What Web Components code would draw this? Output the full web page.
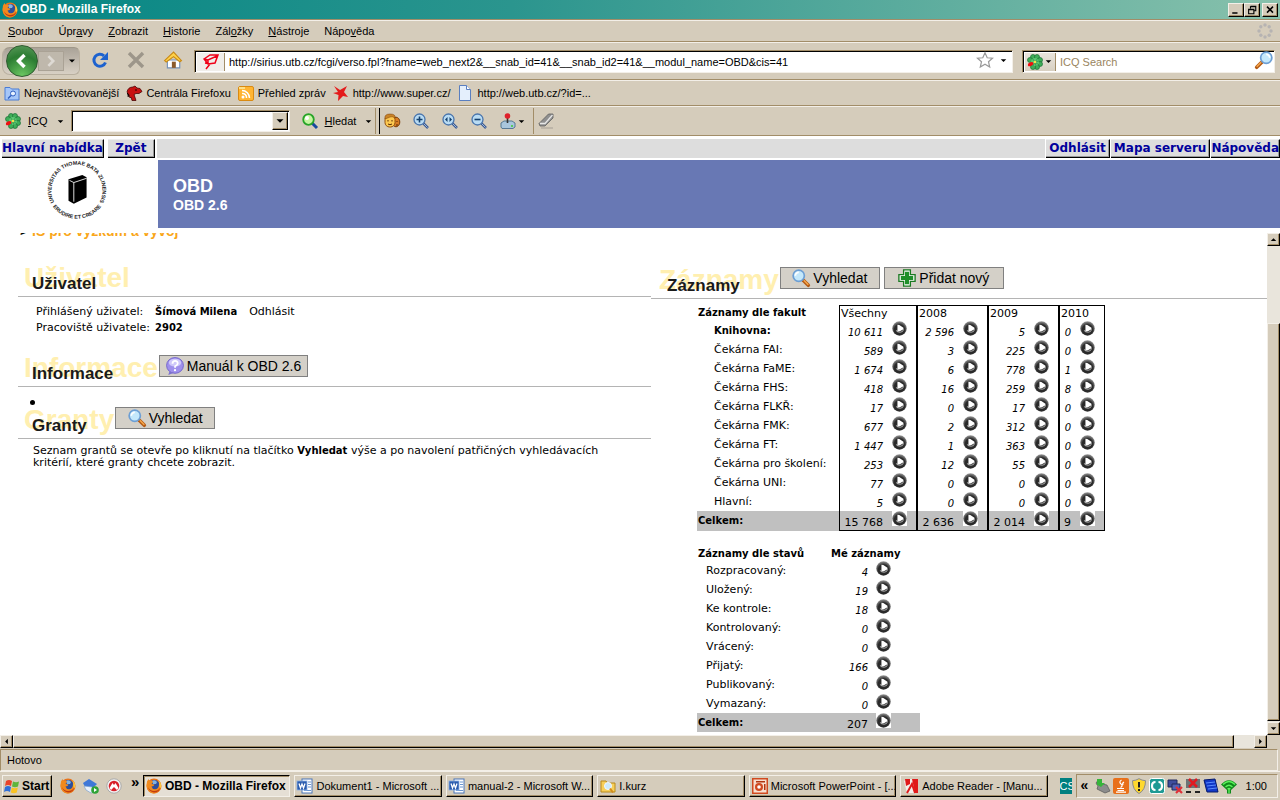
<!DOCTYPE html>
<html lang="cs">
<head>
<meta charset="utf-8">
<title>OBD - Mozilla Firefox</title>
<style>
  html, body {
    height: 100%;
    margin: 0;
  }
  body {
    --face: #d5ccbb;
    --light: #f3efe8;
    --dark: #a28d68;
    --track: #e9e5dc;
    overflow: hidden;
    font: 11px/14px "Liberation Sans", Arial, sans-serif;
    color: #000;
  }
</style>
</head>
<body>
<browser-window>
  <title-bar slot="chrome">OBD - Mozilla Firefox</title-bar>
  <menu-bar slot="chrome"></menu-bar>
  <nav-bar slot="chrome"></nav-bar>
  <bookmark-bar slot="chrome"></bookmark-bar>
  <icq-bar slot="chrome"></icq-bar>
  <page-banner slot="page"></page-banner>
  <page-content slot="page"></page-content>
  <status-bar slot="footer">Hotovo</status-bar>
  <task-bar slot="footer"></task-bar>
</browser-window>

<script>
const flower = `<g fill="#3fae58" stroke="#1d7038" stroke-width=".7">
  <circle cx="6" cy="3" r="2.5"/><circle cx="10" cy="3" r="2.5"/><circle cx="13" cy="6" r="2.5"/><circle cx="13" cy="10" r="2.5"/>
  <circle cx="10" cy="13" r="2.5"/><circle cx="6" cy="13" r="2.5"/><circle cx="3" cy="6" r="2.5"/></g>
  <circle cx="8" cy="8" r="4" fill="#5cc873"/>
  <path d="M8 8L5 4M8 8l3-4M8 8l4-1M8 8l4 3M8 8l1 4M8 8l-2 4" stroke="#2a8a44" stroke-width=".7"/>
  <ellipse cx="3.600" cy="10" rx="3" ry="1.800" fill="#f01010" transform="rotate(-25 4 10)"/><circle cx="8" cy="8" r="1.300" fill="#f6e34a"/>`;

const zoomLens = (inner) => `<path d="M10 10l5 5" stroke="#3a5a92" stroke-width="2.500"/><path d="M10 10l4.500 4.500" stroke="#9fb6d8"/>
  <circle cx="6.500" cy="6.500" r="5.500" fill="#b9dcf4" stroke="#4a75ac" stroke-width="1.300"/>
  <g stroke="#14406e" stroke-width="1.600" fill="#14406e">${inner}</g>`;

const magnifier = (flip) => `<g ${flip ? 'transform="matrix(-1 0 0 1 16 0)"' : ""}>
  <path d="M10 10l4.500 4.500" stroke="#b45a14" stroke-width="3.200" stroke-linecap="round"/><path d="M10.500 10l4 4" stroke="#f7a84c" stroke-width="1.200"/>
  <circle cx="6" cy="6" r="5" fill="#c4e8fb" stroke="#6d9fd4" stroke-width="1.500"/><path d="M3 6a3 3 0 0 1 3-3" stroke="#fff" stroke-width="1.500" fill="none"/></g>`;

const word = `<rect x="5" y="1" width="10" height="14" fill="#fff" stroke="#4a74b8"/><path d="M11 4h3M11 6.500h3M11 9h3M7 12.500h7" stroke="#6a94d0"/>
  <rect x="0" y="3" width="10" height="9" fill="#2b5cae" stroke="#8eb2e6" stroke-width=".8"/><path d="M2 5.500l1.500 4.500L5 6l1.500 4L8 5.500" stroke="#fff" stroke-width="1.300" fill="none"/>`;

const icons = {
  firefox: `<circle cx="8" cy="8" r="7.500" fill="#e8731a"/><circle cx="8.500" cy="7" r="5" fill="#2d4f9c"/><path d="M6 3q3-2 5 1l-1 2-3 0z" fill="#7fb2e2"/>
    <path d="M1 3.500L2.500 1l1 2Q6 2 7 4L5.500 6l3 .5-1 1.500-2 .5q1 3.500 5 2.500 2.500-1 2.500-5l1-2q2.500 6-1.500 9.500-4.500 3.500-9 .5Q-.5 10 1 3.500z" fill="#f08a1e"/>
    <path d="M2 9q1 4.500 6 5.500 5 0 6.500-5Q12 13 8 13 4 13 2 9z" fill="#c33a10"/><path d="M12 2q4 3 3 8l-1.500-1q.5-4-1.500-7z" fill="#fbc640"/>`,
  reload: `<path d="M13.500 10.500A6 6 0 1 1 12 3.800" fill="none" stroke="#1d62cf" stroke-width="3"/><path d="M16 0v8H8z" fill="#1d62cf"/>`,
  stop: `<path d="M1 1l14 14M15 1L1 15" stroke="#9d968a" stroke-width="3.400"/>`,
  home: `<path d="M3 8h11v7H3z" fill="#fff" stroke="#7390b8"/><path d="M7 9.500h3.500V15H7z" fill="#8b5a2b"/><path d="M0.500 8.500L8.500 1l7 7.500-1.500 1L8.500 5 2 9.800z" fill="#ffd24a" stroke="#c98a16"/>`,
  verso: `<path d="M1 5L7 1h8l-3 8-7 1zM1 5l4 1 9-4M5 6v4M2 9l5 1-4 5" fill="none" stroke="#f00018" stroke-width="1.500"/>`,
  flower,
  star: `<path d="M8 .8l2.200 5 5.300.4-4 3.500 1.200 5.400L8 12.300l-4.700 2.800 1.200-5.400-4-3.500 5.300-.4z" fill="#fff" stroke="#999" stroke-width="1.200"/>`,
  find: magnifier(false),
  findLeft: magnifier(true),
  findGreen: `<path d="M10 10l5 5" stroke="#1749a0" stroke-width="3"/><circle cx="6.500" cy="6.500" r="5.300" fill="#c6f5a0" stroke="#28a428" stroke-width="1.800"/><circle cx="5" cy="5" r="2" fill="#fff"/>`,
  folderBlue: `<path d="M1 2.500h5l1.500 1.500H15v11H1z" fill="#a5c6f8" stroke="#4b7cd4"/><circle cx="9" cy="8.500" r="2.500" fill="#e9f3ff" stroke="#2d5ec0"/><path d="M7 10.500l-3 3" stroke="#2d5ec0" stroke-width="1.500"/>`,
  dino: `<path d="M1 7Q2 2 7 2l2-1 2 2 3 .5 2 3-3 2H10l-2 1 2 6H6L5 12l-1 1-1-3z" fill="#c81010" stroke="#4a0505" stroke-width=".8"/><path d="M1 8l2 2-1 2M9 5h2" stroke="#200"/>`,
  rss: `<rect x=".5" y="1.500" width="15" height="14" rx="1.500" fill="#ffb432" stroke="#d98a12"/><path d="M1 2h6v2H1z" fill="#fce08a"/><circle cx="5" cy="12" r="1.500" fill="#fff"/><path d="M4 8.500a4 4 0 0 1 4.500 4.500M4 5.500A7.500 7.500 0 0 1 11.500 13" fill="none" stroke="#fff" stroke-width="1.500"/>`,
  redStar: `<path d="M1 1l6 4 7-4-3 6 4 5-5-1-5 5 .5-6L0 8l5-1z" fill="#e41b1b"/>`,
  page: `<path d="M2.500.5h7l4 4v11h-11z" fill="#e4effc" stroke="#5a7fc0"/><path d="M9.500.5v4h4" fill="#fff" stroke="#5a7fc0"/>`,
  faces: `<ellipse cx="12" cy="9" rx="3.800" ry="4.800" fill="#d87c24" stroke="#7a3d08"/><rect x="1" y="2" width="10" height="12" rx="4.500" fill="#fcc850" stroke="#92500e"/><path d="M1 6Q0 1 6 1t5 4Q8 3 6 4T1 6z" fill="#c98428" stroke="#7a3d08" stroke-width=".5"/><path d="M4 7v1.500M8 7v1.500M4 11q2 1.500 4 0M13 8v1M12 12h2" stroke="#5a2b05" fill="none"/>`,
  zoomIn: zoomLens(`<path d="M3.500 6.500h6M6.500 3.500v6"/>`),
  zoomFit: zoomLens(`<path d="M5.500 4v5L3 6.500zM7.500 4v5L10 6.500z" stroke="none"/>`),
  zoomOut: zoomLens(`<path d="M3.500 6.500h6"/>`),
  joystick: `<path d="M1 10l3-2h8l3 2v4l-2 1.500H2L1 14z" fill="#a9c6dc" stroke="#3d6484" stroke-width=".8"/><path d="M7.500 4v6" stroke="#333" stroke-width="1.600"/><circle cx="7.500" cy="3" r="2.800" fill="#e0202a"/><circle cx="12" cy="13" r="1" fill="#3ccc35"/>`,
  eraser: `<path d="M3 15h12" stroke="#b5aea2" stroke-width="1.500"/><path d="M1 10.500L10.500 1H15v4L7 13H2z" fill="#8f8f8f" stroke="#5e5e5e" stroke-width=".8"/><path d="M2 10.500h5L14.500 2" fill="none" stroke="#e6e6e6" stroke-width="1.300"/>`,
  throbber: `<g fill="#b6b3b2"><circle cx="8" cy="2" r="1.700"/><circle cx="12.200" cy="3.800" r="1.700"/><circle cx="14" cy="8" r="1.700"/><circle cx="12.200" cy="12.200" r="1.700"/><circle cx="8" cy="14" r="1.700"/><circle cx="3.800" cy="12.200" r="1.700"/><circle cx="2" cy="8" r="1.700"/><circle cx="3.800" cy="3.800" r="1.700"/></g>`,
  help: `<ellipse cx="8" cy="7.500" rx="7.500" ry="7" fill="#9f90ec" stroke="#6f62c8" stroke-width=".8"/><path d="M3 13l-1 3 5-2z" fill="#7d70cf"/><ellipse cx="8" cy="5" rx="5.500" ry="3.500" fill="#cfc8fa"/><path d="M5.800 6q0-2.500 2.300-2.500T10.400 5.800q0 1.200-2.300 2.400v1.300" fill="none" stroke="#fff" stroke-width="1.600"/><circle cx="8" cy="11.700" r="1" fill="#fff"/>`,
  plus: `<path d="M5 .8h6V5h4.200v6H11v4.200H5V11H.8V5H5z" fill="#fff" stroke="#1a7a22" stroke-width="1.200"/><path d="M6.200 2.500h3.600v3.700h3.700v3.600H9.800v3.700H6.200V9.800H2.500V6.200h3.700z" fill="#1f8f2a"/>`,
  play: `<defs><radialGradient id="b" cx=".5" cy=".6" r=".6"><stop offset=".6" stop-color="#2a2a2a"/><stop offset="1" stop-color="#9a9a9a"/></radialGradient></defs>
    <circle cx="8" cy="8" r="7.700" fill="url(#b)"/><path d="M4.500 10a4.500 4.500 0 0 0 8-1" fill="none" stroke="#999" stroke-width="1.200"/><path d="M5.800 4l2 .2 4.400 3v1.600L8.500 11l-2.700.3z" fill="#fff"/>`,
  windows: `<path d="M2 3q3-2 6 0L7 8Q4 6 1 8z" fill="#e8432a"/><path d="M9 3.500q3 1.500 6 0L14 8.500q-3 1.500-6 0z" fill="#5fb53c"/><path d="M1 9q3-2 6 0l-1 5Q3 12 0 14z" fill="#2f6fd8"/><path d="M7.800 9.500q3 1.500 6 0l-1 5q-3 1.500-6 0z" fill="#f9c222"/>`,
  bird: `<path d="M0 5l6-4 8 5-4 4-8-1z" fill="#3f78d8"/><path d="M1 8l8 1 4 5-5 1-5-3z" fill="#e9f1fb" stroke="#7ea2cc" stroke-width=".7"/><circle cx="12" cy="12" r="3.800" fill="#2ea336"/><path d="M11 10l3 2-3 2z" fill="#fff"/>`,
  alert: `<circle cx="8" cy="8" r="7.200" fill="#f4f4f4" stroke="#aaa"/><circle cx="8" cy="8" r="5.300" fill="#d8202a"/><path d="M3.500 10l3-5L8 7l1.500-2 3 5-1.500 2-3-3-3 3z" fill="#fff"/>`,
  word,
  folder: `<path d="M1 3h5l1.500 2H15v9H1z" fill="#f7cf5a" stroke="#b98a1c"/><circle cx="8" cy="8" r="3.500" fill="#cdeafc" stroke="#f1f8ff"/><path d="M10 10.500l3 4" stroke="#d38b1c" stroke-width="2"/>`,
  powerpoint: `<rect x="0" y="0" width="16" height="16" fill="#d04a20"/><rect x="1.500" y="1.500" width="13" height="13" fill="#f7dfd0"/><circle cx="7" cy="9" r="4" fill="#d04a20"/><circle cx="7" cy="9" r="1.800" fill="#fff"/><path d="M4 3h9v1.500H4zM12 6h1.500v6H12z" fill="#b03510"/>`,
  adobe: `<path d="M1 3l4-2h10v14H4z" fill="#f3f0ec"/><path d="M2 1h5v5L3 8zM9 1h6v14h-3z" fill="#e01a1a"/><path d="M4 15L9 6l3 9" fill="none" stroke="#e01a1a" stroke-width="2"/>`,
  usb: `<path d="M4 1l3 5 5 1 3 6-5 2-8-4 1-3-2-3z" fill="#8c8c8c" stroke="#555" stroke-width=".7"/><path d="M2 1h5v4h3L6 9 1 6h1z" fill="#36b53a"/>`,
  java: `<rect width="16" height="16" rx="2" fill="#e8701a"/><path d="M8.500 2q-3 2-.5 4t-.5 3.500M11 4Q9 5 10 7M4 10.500h7M4.500 12.500h6.500M3 14.200h10" stroke="#fff" stroke-width="1.200" fill="none"/>`,
  shield: `<path d="M8 .7q3 1.800 6.500 2Q14.500 12 8 15.500 1.500 12 1.500 2.700 5 2.500 8 .7z" fill="#ffd92e" stroke="#8b8b8b"/><path d="M8 4v5.500M8 11v2" stroke="#222" stroke-width="2"/>`,
  sync: `<rect x=".5" y=".5" width="15" height="15" rx="2" fill="#1e9a94" stroke="#fff"/><path d="M6.500 4Q3 4 3 8t3.500 4M9.500 4Q13 4 13 8t-3.500 4" fill="none" stroke="#fff" stroke-width="2.200"/>`,
  netOff: `<path d="M1 2h9v7H1z" fill="#3e4d9c" stroke="#20285c"/><path d="M5 6h8v6H5z" fill="#5262b4" stroke="#20285c"/><path d="M9 9l6 6M15 9l-6 6" stroke="#e03038" stroke-width="2.200"/>`,
  netCross: `<path d="M1 1h14v9H1z" fill="#6c7476"/><path d="M4 1l8 8M12 1L4 9" stroke="#e01a20" stroke-width="2.500"/><path d="M1 13h5v2H1zM10 13h5v2h-5z" fill="#222"/>`,
  monitor: `<path d="M1 2l11-1 3 13H4z" fill="#1238c8" stroke="#061a6a"/><path d="M3 5l9-1M4 8l9-1M5 11l9-1" stroke="#5b8cff"/>`,
  wifi: `<path d="M0 6.500Q8-2 16 6.500L10 12v3.500H6V12z" fill="#0f8a1a"/><path d="M2 6.500q6-6 12 0M4.500 9q3.500-3.500 7 0M6.500 11q1.500-1 3 0M8 11v4" fill="none" stroke="#5cf05c" stroke-width="1.400"/>`,
  minimize: `<path d="M3 11h7v2H3z"/>`,
  restore: `<path d="M6 3h7v6h-2M6 3.500h7M6 3v3M3.500 7h7v6h-7zM3.500 7.500h7" fill="none" stroke="#000" stroke-width="1.500"/>`,
  close: `<path d="M4 3.500l8 8M12 3.500l-8 8" stroke="#000" stroke-width="2"/>`,
  down: `<path d="M4 6h8l-4 4z"/>`,
  up: `<path d="M4 10h8L8 6z"/>`,
  left: `<path d="M10 4v8L6 8z"/>`,
  right: `<path d="M6 4v8l4-4z"/>`,
};

// Base class: every component is a plain template in an open shadow root
class View extends HTMLElement {
  constructor() {
    super();
    this.attachShadow({ mode: "open" });
  }

  connectedCallback() {
    this.shadowRoot.innerHTML = `
      <style>
        :host { display: block; box-sizing: border-box; }
        * { box-sizing: border-box; }
        button, input, select {
          font: inherit;
          color: inherit;
          margin: 0;
          padding: 0;
          border: 0;
          border-radius: 0;
          background: none;
        }
        .raised {
          background: var(--face);
          border: 1px solid;
          border-color: var(--light) #000 #000 var(--light);
          box-shadow: inset -1px -1px var(--dark);
        }
      </style>
      ${this.template()}
    `;
  }
}

class AppIcon extends View {
  template() {
    const size = this.getAttribute("size") || 16;
    return `
      <style>
        :host { display: inline-flex; flex: none; }
        svg { display: block; overflow: visible; }
      </style>
      <svg width="${size}" height="${size}" viewBox="0 0 16 16" aria-hidden="true">${icons[this.getAttribute("name")]}</svg>
    `;
  }
}

class BrowserWindow extends View {
  template() {
    return `
      <style>
        :host {
          display: flex;
          flex-direction: column;
          height: 100vh;
          background: var(--face);
        }
        main {
          flex: 1;
          min-height: 0;
          display: flex;
          flex-direction: column;
          background: #fff;
        }
      </style>
      <slot name="chrome"></slot>
      <main><slot name="page"></slot></main>
      <slot name="footer"></slot>
    `;
  }
}

class TitleBar extends View {
  template() {
    return `
      <style>
        :host {
          display: flex;
          align-items: center;
          height: 20px;
          padding: 0 2px;
          border-bottom: 1px solid var(--dark);
          background: linear-gradient(to right, #048684, #2b958e 40%, #88c1ac);
          color: #fff;
          font-size: 12px;
          font-weight: bold;
        }
        h1 { flex: 1; margin: 0 0 2px 2px; font-size: 12px; }
        button { width: 16px; height: 14px; display: grid; place-items: center; }
        button:last-child { margin-left: 2px; }
      </style>
      <app-icon name="firefox"></app-icon>
      <h1><slot></slot></h1>
      <button class="raised" aria-label="Minimalizovat"><app-icon name="minimize" size="12"></app-icon></button>
      <button class="raised" aria-label="Obnovit"><app-icon name="restore" size="12"></app-icon></button>
      <button class="raised" aria-label="Zavřít"><app-icon name="close" size="12"></app-icon></button>
    `;
  }
}

class MenuBar extends View {
  template() {
    return `
      <style>
        :host {
          display: flex;
          align-items: center;
          height: 22px;
          padding: 0 7px 0 8px;
          border-top: 1px solid var(--light);
          border-bottom: 1px solid var(--dark);
        }
        nav { flex: 1; display: flex; gap: 15px; }
      </style>
      <nav>
        <button><u>S</u>oubor</button>
        <button>Úpr<u>a</u>vy</button>
        <button><u>Z</u>obrazit</button>
        <button><u>H</u>istorie</button>
        <button>Zál<u>o</u>žky</button>
        <button><u>N</u>ástroje</button>
        <button>Nápo<u>v</u>ěda</button>
      </nav>
      <app-icon name="throbber"></app-icon>
    `;
  }
}

class NavBar extends View {
  template() {
    return `
      <style>
        :host {
          display: flex;
          align-items: center;
          gap: 20px;
          height: 38px;
          padding: 0 5px 0 2px;
          border-top: 1px solid var(--light);
          border-bottom: 1px solid var(--dark);
        }
        .travel {
          display: flex;
          align-items: center;
          width: 78px;
          height: 28px;
          margin-right: -8px;
          border: 1px solid #b9b0a0;
          border-top-color: #9f9788;
          border-radius: 8px 6px 6px 8px;
          background: linear-gradient(#aaa398, #d8d0c4);
        }
        .travel button { display: grid; place-items: center; }
        .travel .back {
          width: 32px;
          height: 32px;
          margin: 0 0 0 3px;
          border: 1px solid #2f5c30;
          border-radius: 50%;
          background: radial-gradient(circle at 50% 100%, #6cc862, #2c7c32 60%, #5e9c5e);
        }
        .travel .forward {
          width: 26px;
          height: 20px;
          border: 1px solid #aaa295;
          background: #bfb8ac;
        }
        .arrow { width: 15px; }
        .field {
          display: flex;
          align-items: center;
          height: 23px;
          border: 1px solid;
          border-color: var(--dark) var(--light) var(--light) var(--dark);
          box-shadow: inset 1px 1px #000;
          background: #fff;
          padding: 2px 1px 1px 2px;
        }
        .field input { flex: 1; min-width: 0; height: 100%; padding: 0 4px; outline: 0; }
        .field input::placeholder { color: #9a8560; opacity: 1; }
        .url { flex: 1; margin-left: -8px; }
        .search { width: 253px; margin-left: -11px; }
        .tag {
          display: flex;
          align-items: center;
          justify-content: center;
          width: 28px;
          height: 100%;
          border-right: 1px solid var(--dark);
          background: linear-gradient(#e9e4dc, #d8d0c2);
        }
        .url .tag { background: #f0eeea; }
        .search .tag { width: 31px; border-right: 1px solid var(--dark); background: linear-gradient(#e9e4dc, #d8d0c2); }
        .url > .arrow { margin-left: 3px; }
      </style>
      <div class="travel">
        <button class="back" aria-label="Zpět">
          <svg width="16" height="16" viewBox="0 0 16 16"><path d="M10.500 2l-6 6 6 6" fill="none" stroke="#fff" stroke-width="3.500"/></svg>
        </button>
        <button class="forward" aria-label="Vpřed">
          <svg width="14" height="14" viewBox="0 0 16 16"><path d="M5 2.500l5.500 5.500L5 13.500" fill="none" stroke="#dedad4" stroke-width="3"/></svg>
        </button>
        <button class="arrow" aria-label="Historie"><app-icon name="down" size="12"></app-icon></button>
      </div>
      <button aria-label="Obnovit"><app-icon name="reload"></app-icon></button>
      <button aria-label="Zastavit"><app-icon name="stop"></app-icon></button>
      <button aria-label="Domů"><app-icon name="home" size="18"></app-icon></button>
      <div class="field url">
        <span class="tag"><app-icon name="verso"></app-icon></span>
        <input type="text" aria-label="Adresa" value="http://sirius.utb.cz/fcgi/verso.fpl?fname=web_next2&amp;__snab_id=41&amp;__snab_id2=41&amp;__modul_name=OBD&amp;cis=41">
        <button aria-label="Přidat záložku"><app-icon name="star"></app-icon></button>
        <button class="arrow" aria-label="Adresy"><app-icon name="down" size="11"></app-icon></button>
      </div>
      <div class="field search">
        <button class="tag" aria-label="Vyhledávač"><app-icon name="flower"></app-icon><app-icon name="down" size="11"></app-icon></button>
        <input type="text" aria-label="Hledat" placeholder="ICQ Search">
        <button aria-label="Hledat"><app-icon name="findLeft" size="18"></app-icon></button>
      </div>
    `;
  }
}

class BookmarkBar extends View {
  template() {
    const links = [
      ["folderBlue", "Nejnavštěvovanější"],
      ["dino", "Centrála Firefoxu"],
      ["rss", "Přehled zpráv"],
      ["redStar", "http://www.super.cz/"],
      ["page", "http://web.utb.cz/?id=..."],
    ];
    return `
      <style>
        :host {
          display: flex;
          align-items: center;
          gap: 7px;
          height: 26px;
          padding: 0 4px;
          border-top: 1px solid var(--light);
          border-bottom: 1px solid var(--dark);
        }
        a {
          display: flex;
          align-items: center;
          gap: 4px;
          color: inherit;
          text-decoration: none;
          white-space: nowrap;
        }
      </style>
      ${links.map(([icon, text]) => `<a href="#"><app-icon name="${icon}"></app-icon>${text}</a>`).join("")}
    `;
  }
}

class IcqBar extends View {
  template() {
    return `
      <style>
        :host {
          display: flex;
          align-items: center;
          height: 30px;
          padding: 0 5px;
          border-top: 1px solid var(--light);
          border-bottom: 1px solid var(--dark);
        }
        button { display: flex; align-items: center; gap: 7px; }
        .combo {
          display: flex;
          width: 219px;
          height: 22px;
          margin: 0 12px 0 5px;
          border: 1px solid;
          border-color: var(--dark) var(--light) var(--light) var(--dark);
          box-shadow: inset 1px 1px #000;
          background: #fff;
          padding: 1px;
        }
        .combo input { flex: 1; min-width: 0; padding-left: 4px; outline: 0; }
        .combo button { width: 16px; justify-content: center; }
        .search { margin-right: 7px; }
        .tools { display: flex; align-items: center; gap: 13px; padding: 0 5px 0 4px; }
        .line { width: 1px; height: 26px; margin-left: 1px; background: var(--dark); }
        .black { margin-left: 3px; background: #000; }
        .tools .joy { gap: 0; }
      </style>
      <button><app-icon name="flower"></app-icon><span><u>I</u>CQ</span><app-icon name="down" size="11"></app-icon></button>
      <div class="combo">
        <input type="text" aria-label="ICQ hledání">
        <button class="raised" aria-label="Rozbalit"><app-icon name="down" size="14"></app-icon></button>
      </div>
      <button class="search"><app-icon name="findGreen"></app-icon><span><u>H</u>ledat</span></button>
      <button aria-label="Možnosti"><app-icon name="down" size="11"></app-icon></button>
      <span class="line"></span>
      <span class="line black"></span>
      <div class="tools">
        <button aria-label="Přátelé"><app-icon name="faces"></app-icon></button>
        <button aria-label="Zvětšit"><app-icon name="zoomIn"></app-icon></button>
        <button aria-label="Původní velikost"><app-icon name="zoomFit"></app-icon></button>
        <button aria-label="Zmenšit"><app-icon name="zoomOut"></app-icon></button>
        <button class="joy" aria-label="Hry"><app-icon name="joystick"></app-icon><app-icon name="down" size="11"></app-icon></button>
      </div>
      <span class="line"></span>
      <div class="tools"><button aria-label="Vymazat"><app-icon name="eraser"></app-icon></button></div>
    `;
  }
}

class PageBanner extends View {
  template() {
    return `
      <style>
        :host { flex: none; font-family: "Liberation Sans", Arial, sans-serif; }
        nav {
          display: flex;
          gap: 1px;
          height: 22px;
          padding: 3px 0 0 2px;
          font: bold 12px/16px "DejaVu Sans", Verdana, sans-serif;
        }
        nav a {
          padding: 0;
          min-width: 47px;
          text-align: center;
          color: #00009c;
          text-decoration: none;
          white-space: nowrap;
          background: #ddd;
          border-top: 1px solid #eee;
          border-right: 1px solid #000;
          border-bottom: 1px solid #000;
          box-shadow: inset -1px -1px #999;
        }
        nav a.wide { padding: 0 3px; }
        nav .back { margin: 0 1px 0 3px; }
        nav span { flex: 1; background: #ddd; }
        header { display: flex; margin-top: 2px; height: 68px; }
        .logo { width: 158px; flex: none; }
        .logo svg { display: block; margin: -3px 0 0 45px; overflow: visible; }
        .name { flex: 1; padding: 16px 15px 0; background: #6878b4; color: #fff; }
        h2 { margin: 0; font-size: 18px; line-height: 21px; }
        p { margin: 0; font-size: 14px; line-height: 16px; font-weight: bold; }
      </style>
      <nav>
        <a href="#">Hlavní nabídka</a>
        <a href="#" class="back">Zpět</a>
        <span></span>
        <a href="#" class="wide">Odhlásit</a>
        <a href="#" class="wide">Mapa serveru</a>
        <a href="#">Nápověda</a>
      </nav>
      <header>
        <div class="logo">
          <svg width="64" height="66" viewBox="0 0 60 62" role="img" aria-label="Univerzita Tomáše Bati ve Zlíně">
            <path id="top" d="M9 43A24 24 0 1 1 51 43" fill="none"/>
            <path id="bottom" d="M7 46A28 28 0 0 0 53 46" fill="none"/>
            <g font-family="Liberation Sans, Arial, sans-serif" font-size="5" font-weight="bold" fill="#222" text-anchor="middle">
              <text><textPath href="#top" startOffset="50%">UNIVERSITAS THOMAE BATA ZLINENSIS</textPath></text>
              <text><textPath href="#bottom" startOffset="50%">· ERUDIRE ET CREARE ·</textPath></text>
            </g>
            <path d="M22 21l13-4 4 2v19l-12 6-5-3z" fill="#000"/><path d="M23 22l4 2v18M27 24l12-4" fill="none" stroke="#fff" stroke-width=".8"/>
          </svg>
        </div>
        <div class="name">
          <h2>OBD</h2>
          <p>OBD 2.6</p>
        </div>
      </header>
    `;
  }
}

class ScrollBar extends View {
  template() {
    const vertical = this.hasAttribute("vertical");
    return `
      <style>
        :host {
          display: flex;
          flex: none;
          flex-direction: ${vertical ? "column" : "row"};
          ${vertical ? "width" : "height"}: 13px;
          background: var(--track);
        }
        button { flex: none; width: 13px; height: 13px; display: grid; place-items: center; overflow: hidden; }
        .before { flex: ${this.getAttribute("before")}; }
        .thumb { flex: ${this.getAttribute("thumb")}; }
        .after { flex: ${this.getAttribute("after")}; }
      </style>
      <button class="raised" aria-label="Zpět"><app-icon name="${vertical ? "up" : "left"}" size="11"></app-icon></button>
      <span class="before"></span>
      <span class="thumb raised"></span>
      <span class="after"></span>
      <button class="raised" aria-label="Dále"><app-icon name="${vertical ? "down" : "right"}" size="11"></app-icon></button>
    `;
  }
}

class ToolButton extends View {
  template() {
    return `
      <style>
        button {
          display: flex;
          align-items: center;
          justify-content: center;
          gap: 3px;
          min-width: 100px;
          height: 22px;
          padding: 0 6px;
          border: 1px solid #808080;
          background: #d4d0c8;
          font: 14px/16px "Liberation Sans", Arial, sans-serif;
          white-space: nowrap;
        }
        :host([wide]) button { min-width: 120px; }
      </style>
      <button><app-icon name="${this.getAttribute("icon")}" size="18"></app-icon><slot></slot></button>
    `;
  }
}

// Section heading: a large pale copy of the title lies behind the real one
class SectionHead extends View {
  template() {
    const title = this.getAttribute("title");
    return `
      <style>
        :host {
          display: flex;
          align-items: flex-end;
          gap: 1px;
          padding: 0 0 2px 6px;
          border-bottom: 1px solid #b4b4b4;
          font-family: "Liberation Sans", Arial, sans-serif;
          font-weight: bold;
        }
        .title { position: relative; font-size: 28px; line-height: 32px; color: #ffefb0; }
        h2 {
          position: absolute;
          left: 8px;
          bottom: 0;
          margin: 0;
          font-size: 17px;
          line-height: 20px;
          color: #1a1a1a;
        }
        .actions { display: flex; gap: 4px; margin-bottom: 7px; font-weight: normal; }
      </style>
      <div class="title"><span aria-hidden="true">${title}</span><h2>${title}</h2></div>
      <div class="actions"><slot></slot></div>
    `;
  }
}

// Table of counts; each number has a link that opens the list of records
class CountTable extends View {
  get data() {
    return this.hasAttribute("states")
      ? {
          title: "Záznamy dle stavů",
          heads: ["Mé záznamy"],
          rows: [
            ["Rozpracovaný:", "4"], ["Uložený:", "19"], ["Ke kontrole:", "18"], ["Kontrolovaný:", "0"],
            ["Vrácený:", "0"], ["Přijatý:", "166"], ["Publikovaný:", "0"], ["Vymazaný:", "0"],
          ],
          total: ["Celkem:", "207"],
        }
      : {
          title: "Záznamy dle fakult",
          heads: ["Všechny", "2008", "2009", "2010"],
          rows: [
            ["Knihovna:", "10 611", "2 596", "5", "0"],
            ["Čekárna FAI:", "589", "3", "225", "0"],
            ["Čekárna FaME:", "1 674", "6", "778", "1"],
            ["Čekárna FHS:", "418", "16", "259", "8"],
            ["Čekárna FLKŘ:", "17", "0", "17", "0"],
            ["Čekárna FMK:", "677", "2", "312", "0"],
            ["Čekárna FT:", "1 447", "1", "363", "0"],
            ["Čekárna pro školení:", "253", "12", "55", "0"],
            ["Čekárna UNI:", "77", "0", "0", "0"],
            ["Hlavní:", "5", "0", "0", "0"],
          ],
          total: ["Celkem:", "15 768", "2 636", "2 014", "9"],
        };
  }

  row([label, ...values]) {
    const cells = values.map((value) => `
      <td><div class="cell"><span>${value}</span><a href="#" aria-label="Otevřít"><app-icon name="play" size="15"></app-icon></a></div></td>`);
    return `<tr><th scope="row">${label}</th>${cells.join("")}</tr>`;
  }

  template() {
    const { title, heads, rows, total } = this.data;
    return `
      <style>
        table {
          border-collapse: separate;
          border-spacing: 0;
          table-layout: fixed;
          width: 408px;
          font: 11px/19px "DejaVu Sans", Verdana, sans-serif;
          white-space: nowrap;
        }
        th, td { padding: 0; text-align: left; vertical-align: top; }
        thead th { height: 15px; padding-left: 1px; line-height: 15px; font-weight: normal; }
        thead th:first-child { font-size: 10px; font-weight: bold; }
        tbody th { padding-left: 17px; font-weight: normal; }
        :host(:not([states])) tbody tr:first-child th { font-size: 10px; font-weight: bold; }
        .label { width: 142px; }
        .c0 { width: 78px; }
        .c1, .c2 { width: 71px; }
        .cell {
          display: flex;
          justify-content: flex-end;
          gap: 9px;
          height: 19px;
          padding: 0 9px 0 0;
          line-height: 24px;
        }
        tbody .cell span { font-size: 10px; font-style: italic; }
        a { display: flex; height: 15px; }
        tfoot tr { background: #c0c0c0; }
        tfoot th { padding-left: 1px; font-size: 10px; }
        tfoot a { background: #fff; }
        :host(:not([states])) thead th + th { border-top: 1px solid #000; }
        :host(:not([states])) th + th, :host(:not([states])) td { border-left: 1px solid #000; border-right: 1px solid #000; }
        :host(:not([states])) tfoot td { border-bottom: 1px solid #000; }

        :host([states]) table { width: 223px; }
        :host([states]) .label { width: 134px; }
        :host([states]) .c0 { width: 89px; }
        :host([states]) thead th { font-size: 10px; font-weight: bold; }
        :host([states]) thead th + th { padding-left: 0; }
        :host([states]) tbody th { padding-left: 9px; }
        :host([states]) .cell { padding-right: 29px; gap: 8px; }
      </style>
      <table>
        <colgroup><col class="label">${heads.map((head, i) => `<col class="c${i}">`).join("")}</colgroup>
        <thead><tr><th scope="col">${title}</th>${heads.map((head) => `<th scope="col">${head}</th>`).join("")}</tr></thead>
        <tbody>${rows.map((row) => this.row(row)).join("")}</tbody>
        <tfoot>${this.row(total)}</tfoot>
      </table>
    `;
  }
}

class PageContent extends View {
  template() {
    return `
      <style>
        :host {
          flex: 1;
          min-height: 0;
          margin-top: 5px;
          display: grid;
          grid-template: minmax(0, 1fr) 13px / minmax(0, 1fr) 13px;
          font: 11px/12px "DejaVu Sans", Verdana, sans-serif;
        }
        .view { overflow: hidden; padding-left: 18px; }
        .path {
          margin: -10px 0 0 2px;
          font: bold 14px/16px "Liberation Sans", Arial, sans-serif;
        }
        .path a { color: #f9a61a; text-decoration: none; }
        .columns { display: grid; grid-template-columns: 633fr 616fr; }
        .left { padding-top: 23px; }
        .right { padding-top: 25px; }
        .right section-head { padding-left: 8px; }
        dl {
          display: grid;
          grid-template-columns: 119px max-content;
          margin: 7px 0 16px 18px;
          line-height: 16px;
        }
        dt { white-space: nowrap; }
        dd { display: flex; gap: 12px; margin: 0; }
        b { font-size: 10px; }
        dd a { color: inherit; text-decoration: none; }
        ul { height: 17px; margin: 0; padding-left: 29px; font-size: 16px; line-height: 32px; }
        p { margin: 6px 20px 0 15px; }
        count-table { margin: 6px 0 0 46px; }
        count-table[states] { margin-top: 15px; }
        .corner { background: var(--face); }
      </style>
      <div class="view">
        <div class="path">&gt; <a href="#">IS pro výzkum a vývoj</a></div>
        <div class="columns">
          <div class="left">
            <section-head title="Uživatel"></section-head>
            <dl>
              <dt>Přihlášený uživatel:</dt><dd><b>Šímová Milena</b><a href="#">Odhlásit</a></dd>
              <dt>Pracoviště uživatele:</dt><dd><b>2902</b></dd>
            </dl>
            <section-head title="Informace"><tool-button icon="help">Manuál k OBD 2.6</tool-button></section-head>
            <ul><li></li></ul>
            <section-head title="Granty"><tool-button icon="find">Vyhledat</tool-button></section-head>
            <p>Seznam grantů se otevře po kliknutí na tlačítko <b>Vyhledat</b> výše a po navolení patřičných vyhledávacích kritérií, které granty chcete zobrazit.</p>
          </div>
          <div class="right">
            <section-head title="Záznamy">
              <tool-button icon="find">Vyhledat</tool-button>
              <tool-button icon="plus" wide>Přidat nový</tool-button>
            </section-head>
            <count-table></count-table>
            <count-table states></count-table>
          </div>
        </div>
      </div>
      <scroll-bar vertical before="77" thumb="398" after="1"></scroll-bar>
      <scroll-bar before="0" thumb="1221" after="20"></scroll-bar>
      <div class="corner"></div>
    `;
  }
}

class StatusBar extends View {
  template() {
    return `
      <style>
        :host {
          height: 22px;
          margin: 1px 2px 0 0;
          padding: 3px 6px;
          border: 1px solid;
          border-color: var(--dark) var(--light) var(--light) var(--dark);
        }
      </style>
      <slot></slot>
    `;
  }
}

class TaskButton extends View {
  template() {
    return `
      <style>
        :host { flex: 1; min-width: 0; }
        button {
          display: flex;
          align-items: center;
          gap: 3px;
          width: 100%;
          height: 22px;
          padding: 0 2px;
          white-space: nowrap;
          overflow: hidden;
        }
        :host([active]) button {
          font-size: 12px;
          font-weight: bold;
          background: #e5dfd5;
          border-color: #000 var(--light) var(--light) #000;
          box-shadow: inset 1px 1px var(--dark);
        }
      </style>
      <button class="raised"><app-icon name="${this.getAttribute("icon")}"></app-icon><slot></slot></button>
    `;
  }
}

class TaskBar extends View {
  template() {
    const tray = ["usb", "java", "shield", "sync", "netOff", "netCross", "monitor", "wifi"];
    return `
      <style>
        :host {
          display: flex;
          align-items: center;
          height: 29px;
          padding: 0 2px;
          border-top: 1px solid var(--light);
        }
        .start {
          display: flex;
          align-items: center;
          gap: 2px;
          width: 50px;
          height: 22px;
          padding-left: 1px;
          font-size: 12px;
          font-weight: bold;
        }
        .quick { display: flex; gap: 7px; margin: 0 9px 0 8px; }
        .more { width: 12px; font-size: 15px; font-weight: bold; line-height: 12px; text-align: left; padding-bottom: 9px; }
        .tasks { flex: 1; display: flex; gap: 4px; min-width: 0; }
        .lang { width: 12px; height: 16px; margin: 0 4px 0 12px; overflow: hidden; background: #008080; color: #fff; line-height: 16px; }
        .tray {
          display: flex;
          align-items: center;
          gap: 2px;
          height: 24px;
          padding: 0 10px 0 4px;
          border: 1px solid;
          border-color: var(--dark) var(--light) var(--light) var(--dark);
        }
        .tray button { width: 12px; font-size: 14px; font-weight: bold; text-align: left; padding-bottom: 2px; }
        time { margin-left: 7px; }
      </style>
      <button class="start raised"><app-icon name="windows"></app-icon>Start</button>
      <div class="quick">
        <app-icon name="firefox"></app-icon>
        <app-icon name="bird"></app-icon>
        <app-icon name="alert"></app-icon>
      </div>
      <button class="more" aria-label="Další">»</button>
      <div class="tasks">
        <task-button icon="firefox" active>OBD - Mozilla Firefox</task-button>
        <task-button icon="word">Dokument1 - Microsoft ...</task-button>
        <task-button icon="word">manual-2 - Microsoft W...</task-button>
        <task-button icon="folder">I.kurz</task-button>
        <task-button icon="powerpoint">Microsoft PowerPoint - [...</task-button>
        <task-button icon="adobe">Adobe Reader - [Manu...</task-button>
      </div>
      <span class="lang">CS</span>
      <div class="tray">
        <button aria-label="Skryté ikony">«</button>
        ${tray.map((name) => `<app-icon name="${name}"></app-icon>`).join("")}
        <time>1:00</time>
      </div>
    `;
  }
}

// Register custom elements
customElements.define("app-icon", AppIcon);
customElements.define("browser-window", BrowserWindow);
customElements.define("title-bar", TitleBar);
customElements.define("menu-bar", MenuBar);
customElements.define("nav-bar", NavBar);
customElements.define("bookmark-bar", BookmarkBar);
customElements.define("icq-bar", IcqBar);
customElements.define("page-banner", PageBanner);
customElements.define("scroll-bar", ScrollBar);
customElements.define("tool-button", ToolButton);
customElements.define("section-head", SectionHead);
customElements.define("count-table", CountTable);
customElements.define("page-content", PageContent);
customElements.define("status-bar", StatusBar);
customElements.define("task-button", TaskButton);
customElements.define("task-bar", TaskBar);
</script>
</body>
</html>
